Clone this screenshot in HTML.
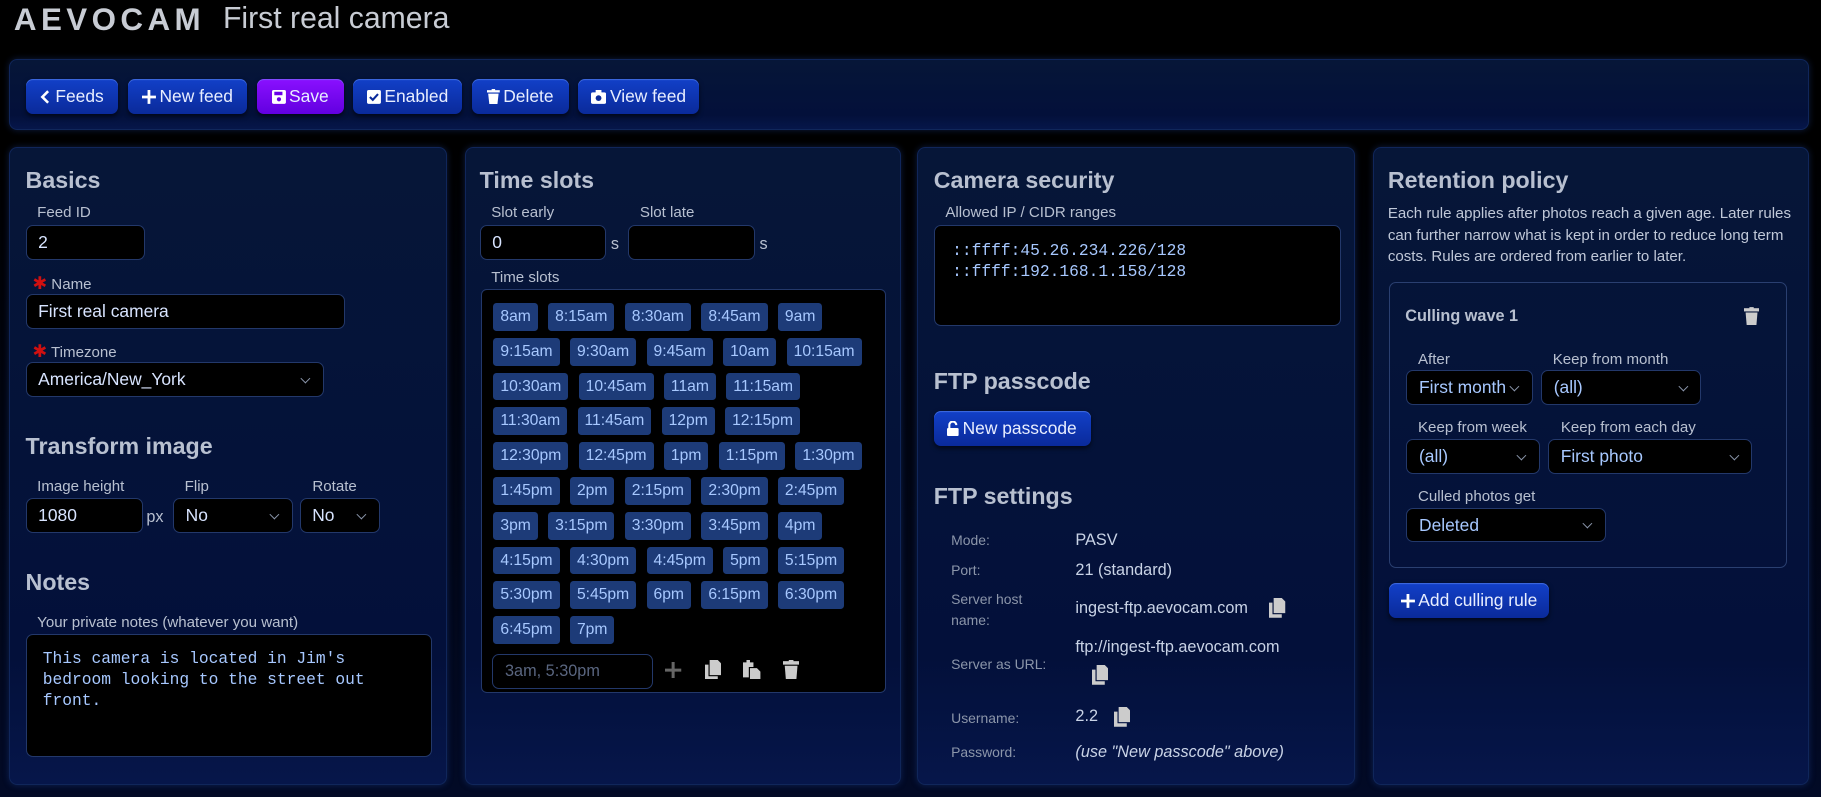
<!DOCTYPE html>
<html><head><meta charset="utf-8">
<style>
*{box-sizing:border-box;margin:0;padding:0}
html,body{width:1821px;height:797px;overflow:hidden;background:#000}
#w{zoom:1.16135;width:1568px;height:686px;position:relative;font-family:"Liberation Sans Narrow","Liberation Sans",sans-serif;color:#c9d3e6;background:linear-gradient(#000 0,#000 120px,#020a26 100%)}
.a{position:absolute}
.logo{left:12px;top:2px;font-size:27px;font-weight:bold;letter-spacing:3.8px;color:#c8ccd4;font-family:"Liberation Sans",sans-serif}
.title{left:192px;top:2px;font-size:26px;color:#c8ccd4}
.panel{background:linear-gradient(#061638,#03103a 80%,#06164a);border:1px solid #10265a;border-radius:7px;box-shadow:0 0 6px rgba(40,80,180,.35)}
.btn{top:68px;height:30px;border-radius:6px;background:linear-gradient(#1240c8,#0a2a9a);color:#e8eeff;font-size:15px;line-height:30px;text-align:center;box-shadow:0 2px 4px rgba(0,0,0,.6),inset 0 1px 0 rgba(120,160,255,.4)}
.btn svg{vertical-align:-2px;margin-right:3px}
h2{position:absolute;font-size:20px;font-weight:bold;color:#b8c0d0}
.lbl{position:absolute;font-size:13px;color:#b8c0d0}
.inp{position:absolute;background:#000;border:1px solid #23386a;border-radius:6px;height:30px;font-size:15px;color:#d8e4ff;line-height:28px;padding-left:10px}
.sel:after{content:"";position:absolute;right:12px;top:10px;width:5px;height:5px;border-right:1px solid #8a95aa;border-bottom:1px solid #8a95aa;transform:rotate(45deg)}
.star{color:#d01010;font-size:15px}
.chips{position:absolute;left:414px;top:249px;width:349px;height:348px;background:#000;border:1px solid #23386a;border-radius:5px;padding:11px 0 0 10px}
.row{display:flex;gap:9px;height:24px;margin-bottom:6px;white-space:nowrap}
.row span{height:24px;line-height:24px;padding:0 6px;background:#1d3b78;color:#a7c8ff;border-radius:3px;font-size:13.5px}
.mono{font-family:"Liberation Mono",monospace;color:#a7c8ff}
.k{position:absolute;left:819px;font-size:12px;color:#8c96aa}
.v{position:absolute;left:926px;font-size:14px;color:#c9d3e6}
.cp{position:absolute}
</style></head><body><div id="w">
<div class="a logo">AEVOCAM</div>
<div class="a title">First real camera</div>

<div class="a panel" style="left:8px;top:51px;width:1550px;height:61px"></div>
<div class="a btn" style="left:22px;width:80px"><svg width="10" height="12" viewBox="0 0 10 12"><path d="M7 1L2 6l5 5" stroke="#fff" stroke-width="2.2" fill="none"/></svg>Feeds</div>
<div class="a btn" style="left:110px;width:103px"><svg width="12" height="12" viewBox="0 0 12 12"><path d="M6 0v12M0 6h12" stroke="#fff" stroke-width="2.4"/></svg>New feed</div>
<div class="a btn" style="left:221px;width:75px;background:linear-gradient(#8a10ff,#6200e0)"><svg width="12" height="12" viewBox="0 0 12 12"><rect x="0" y="0" width="12" height="12" rx="1.5" fill="#fff"/><rect x="2" y="1.5" width="7" height="3" fill="#6a00e8"/><circle cx="6" cy="8" r="1.8" fill="#6a00e8"/></svg>Save</div>
<div class="a btn" style="left:304px;width:94px"><svg width="12" height="12" viewBox="0 0 12 12"><rect width="12" height="12" rx="1.5" fill="#fff"/><path d="M2.5 6l2.5 2.5 4.5-5" stroke="#0a2a9a" stroke-width="1.8" fill="none"/></svg>Enabled</div>
<div class="a btn" style="left:406px;width:84px"><svg width="11" height="13" viewBox="0 0 11 13"><rect x="0" y="1" width="11" height="2" fill="#fff"/><rect x="4" y="0" width="3" height="2" fill="#fff"/><path d="M1 4h9l-1 9H2z" fill="#fff"/></svg>Delete</div>
<div class="a btn" style="left:498px;width:104px"><svg width="13" height="12" viewBox="0 0 13 12"><rect x="0" y="2" width="13" height="10" rx="1.5" fill="#fff"/><rect x="4" y="0" width="5" height="3" fill="#fff"/><circle cx="6.5" cy="7" r="2.5" fill="#0a2a9a"/></svg>View feed</div>

<div class="a panel" style="left:8px;top:127px;width:377px;height:549px"></div>
<div class="a panel" style="left:400px;top:127px;width:376px;height:549px"></div>
<div class="a panel" style="left:790px;top:127px;width:377px;height:549px"></div>
<div class="a panel" style="left:1182px;top:127px;width:376px;height:549px"></div>

<h2 style="left:22px;top:144px">Basics</h2>
<div class="lbl" style="left:32px;top:176px">Feed ID</div>
<div class="inp" style="left:22px;top:194px;width:103px">2</div>
<div class="lbl" style="left:28px;top:235px"><span class="star">✱</span> Name</div>
<div class="inp" style="left:22px;top:253px;width:275px">First real camera</div>
<div class="lbl" style="left:28px;top:294px"><span class="star">✱</span> Timezone</div>
<div class="inp sel" style="left:22px;top:312px;width:257px">America/New_York</div>
<h2 style="left:22px;top:373px">Transform image</h2>
<div class="lbl" style="left:32px;top:412px">Image height</div>
<div class="lbl" style="left:159px;top:412px">Flip</div>
<div class="lbl" style="left:269px;top:412px">Rotate</div>
<div class="inp" style="left:22px;top:429px;width:101px">1080</div>
<div class="lbl" style="left:126px;top:437px;font-size:14px">px</div>
<div class="inp sel" style="left:149px;top:429px;width:103px">No</div>
<div class="inp sel" style="left:258px;top:429px;width:69px">No</div>
<h2 style="left:22px;top:490px">Notes</h2>
<div class="lbl" style="left:32px;top:529px">Your private notes (whatever you want)</div>
<div class="inp mono" style="left:22px;top:546px;width:350px;height:106px;padding:12px 14px;line-height:18px;font-size:14px">This camera is located in Jim's bedroom looking to the street out front.</div>

<h2 style="left:413px;top:144px">Time slots</h2>
<div class="lbl" style="left:423px;top:176px">Slot early</div>
<div class="lbl" style="left:551px;top:176px">Slot late</div>
<div class="inp" style="left:413px;top:194px;width:109px">0</div>
<div class="lbl" style="left:526px;top:202px;font-size:14px">s</div>
<div class="inp" style="left:541px;top:194px;width:109px"></div>
<div class="lbl" style="left:654px;top:202px;font-size:14px">s</div>
<div class="lbl" style="left:423px;top:232px">Time slots</div>
<div class="chips">
<div class="row"><span>8am</span><span>8:15am</span><span>8:30am</span><span>8:45am</span><span>9am</span></div>
<div class="row"><span>9:15am</span><span>9:30am</span><span>9:45am</span><span>10am</span><span>10:15am</span></div>
<div class="row"><span>10:30am</span><span>10:45am</span><span>11am</span><span>11:15am</span></div>
<div class="row"><span>11:30am</span><span>11:45am</span><span>12pm</span><span>12:15pm</span></div>
<div class="row"><span>12:30pm</span><span>12:45pm</span><span>1pm</span><span>1:15pm</span><span>1:30pm</span></div>
<div class="row"><span>1:45pm</span><span>2pm</span><span>2:15pm</span><span>2:30pm</span><span>2:45pm</span></div>
<div class="row"><span>3pm</span><span>3:15pm</span><span>3:30pm</span><span>3:45pm</span><span>4pm</span></div>
<div class="row"><span>4:15pm</span><span>4:30pm</span><span>4:45pm</span><span>5pm</span><span>5:15pm</span></div>
<div class="row"><span>5:30pm</span><span>5:45pm</span><span>6pm</span><span>6:15pm</span><span>6:30pm</span></div>
<div class="row"><span>6:45pm</span><span>7pm</span></div>
</div>
<div class="inp" style="left:424px;top:563px;width:138px;color:#5a6680;font-size:14px">3am, 5:30pm</div>
<svg class="cp" style="left:573px;top:570px" width="14" height="14" viewBox="0 0 14 14"><path d="M7 0v14M0 7h14" stroke="#666" stroke-width="2.6"/></svg>
<svg class="cp" style="left:607px;top:568px" width="14" height="17" viewBox="0 0 14 17"><path d="M4 0h7l3 3v10H4z" fill="#ccc"/><path d="M0 4h3v10h8v3H0z" fill="#ccc"/></svg>
<svg class="cp" style="left:640px;top:568px" width="15" height="17" viewBox="0 0 15 17"><path d="M0 2h9v4H5v9H0z" fill="#ccc"/><rect x="3" y="0" width="3" height="3" fill="#ccc"/><path d="M6 7h6l3 3v7H6z" fill="#ccc"/></svg>
<svg class="cp" style="left:674px;top:568px" width="14" height="17" viewBox="0 0 14 17"><rect x="0" y="1" width="14" height="3" fill="#ccc"/><rect x="5" y="0" width="4" height="2" fill="#ccc"/><path d="M1.5 5h11l-1 12h-9z" fill="#ccc"/></svg>

<h2 style="left:804px;top:144px">Camera security</h2>
<div class="lbl" style="left:814px;top:176px">Allowed IP / CIDR ranges</div>
<div class="inp mono" style="left:804px;top:194px;width:351px;height:87px;padding:13px 15px;line-height:18px;font-size:14px">::ffff:45.26.234.226/128<br>::ffff:192.168.1.158/128</div>
<h2 style="left:804px;top:317px">FTP passcode</h2>
<div class="a btn" style="left:804px;top:354px;width:135px"><svg width="10" height="13" viewBox="0 0 10 13"><path d="M2 6V3.5a3 3 0 0 1 6 0" stroke="#fff" stroke-width="1.8" fill="none"/><rect x="0" y="6" width="10" height="7" rx="1" fill="#fff"/></svg>New passcode</div>
<h2 style="left:804px;top:416px">FTP settings</h2>
<div class="k" style="top:458px">Mode:</div><div class="v" style="top:457px">PASV</div>
<div class="k" style="top:484px">Port:</div><div class="v" style="top:483px">21 (standard)</div>
<div class="k" style="top:507px;line-height:18px">Server host<br>name:</div><div class="v" style="top:516px">ingest-ftp.aevocam.com</div>
<svg class="cp" style="left:1093px;top:515px" width="14" height="17" viewBox="0 0 14 17"><path d="M4 0h7l3 3v10H4z" fill="#ccc"/><path d="M0 4h3v10h8v3H0z" fill="#ccc"/></svg>
<div class="v" style="top:549px">ftp://ingest-ftp.aevocam.com</div>
<div class="k" style="top:565px">Server as URL:</div>
<svg class="cp" style="left:940px;top:573px" width="14" height="17" viewBox="0 0 14 17"><path d="M4 0h7l3 3v10H4z" fill="#ccc"/><path d="M0 4h3v10h8v3H0z" fill="#ccc"/></svg>
<div class="k" style="top:611px">Username:</div><div class="v" style="top:609px">2.2</div>
<svg class="cp" style="left:959px;top:609px" width="14" height="17" viewBox="0 0 14 17"><path d="M4 0h7l3 3v10H4z" fill="#ccc"/><path d="M0 4h3v10h8v3H0z" fill="#ccc"/></svg>
<div class="k" style="top:641px">Password:</div><div class="v" style="top:640px;font-style:italic">(use "New passcode" above)</div>

<h2 style="left:1195px;top:144px">Retention policy</h2>
<div class="lbl" style="left:1195px;top:175px;width:355px;font-size:13px;line-height:18.5px;color:#c0c8d8">Each rule applies after photos reach a given age. Later rules can further narrow what is kept in order to reduce long term costs. Rules are ordered from earlier to later.</div>
<div class="a" style="left:1196px;top:243px;width:343px;height:246px;border:1px solid #2a3f70;border-radius:6px"></div>
<div class="lbl" style="left:1210px;top:264px;font-weight:bold;font-size:14px">Culling wave 1</div>
<svg class="cp" style="left:1502px;top:264px" width="13" height="16" viewBox="0 0 14 17"><rect x="0" y="1" width="14" height="3" fill="#ccc"/><rect x="5" y="0" width="4" height="2" fill="#ccc"/><path d="M1.5 5h11l-1 12h-9z" fill="#ccc"/></svg>
<div class="lbl" style="left:1221px;top:302px">After</div>
<div class="lbl" style="left:1337px;top:302px">Keep from month</div>
<div class="inp sel" style="left:1211px;top:319px;width:109px;color:#a7c8ff">First month</div>
<div class="inp sel" style="left:1327px;top:319px;width:138px;color:#a7c8ff">(all)</div>
<div class="lbl" style="left:1221px;top:361px">Keep from week</div>
<div class="lbl" style="left:1344px;top:361px">Keep from each day</div>
<div class="inp sel" style="left:1211px;top:378px;width:115px;color:#a7c8ff">(all)</div>
<div class="inp sel" style="left:1333px;top:378px;width:176px;color:#a7c8ff">First photo</div>
<div class="lbl" style="left:1221px;top:420px">Culled photos get</div>
<div class="inp sel" style="left:1211px;top:437px;width:172px;color:#a7c8ff">Deleted</div>
<div class="a btn" style="left:1196px;top:502px;width:138px"><svg width="12" height="12" viewBox="0 0 12 12"><path d="M6 0v12M0 6h12" stroke="#fff" stroke-width="2.4"/></svg>Add culling rule</div>
</div></body></html>
